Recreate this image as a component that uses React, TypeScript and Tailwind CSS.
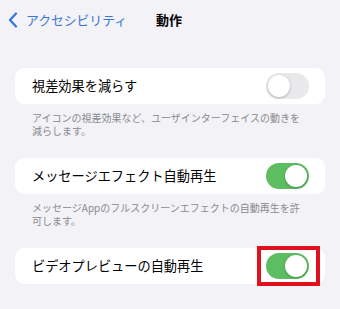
const font = { fontFamily: '"Noto Sans CJK JP", "Noto Sans", sans-serif' };

function Toggle({ on }: { on: boolean }) {
  return (
    <div
      className={`w-[43px] h-[26px] rounded-full p-[2px] flex ${
        on ? 'bg-[#5dbe61] justify-end' : 'bg-[#e9e9eb] justify-start'
      }`}
    >
      <div className="w-[22px] h-[22px] rounded-full bg-white shadow-[0_1px_3px_rgba(0,0,0,0.25)]" />
    </div>
  );
}

function Row({ label, on, highlight }: { label: string; on: boolean; highlight?: boolean }) {
  return (
    <div className="mx-[15px] h-[36px] bg-white rounded-[9px] pl-[17px] pr-[16px] flex items-center justify-between">
      <span className="text-[13.2px] text-black leading-none">{label}</span>
      {highlight ? (
        <div className="border-[4px] border-[#e0101c] pl-[5px] pr-[7px] py-[3px] -mr-[11px] -my-[2px]">
          <Toggle on={on} />
        </div>
      ) : (
        <Toggle on={on} />
      )}
    </div>
  );
}

function Note({ children }: { children: React.ReactNode }) {
  return (
    <p className="mx-[15px] pl-[17px] pr-[16px] pt-[7px] text-[10px] leading-[13px] text-[#8a8a8e]">
      {children}
    </p>
  );
}

export default function App() {
  return (
    <div className="w-[340px] h-[309px] bg-[#f2f2f7] overflow-hidden" style={font}>
      <div className="h-[40px] flex items-center">
        <div className="flex items-center pl-[8px] text-[#3a76d6]">
          <svg width="10" height="16" viewBox="0 0 10 16" fill="none">
            <path d="M8 1.5 L2 8 L8 14.5" stroke="currentColor" strokeWidth="2.3" strokeLinecap="round" strokeLinejoin="round" />
          </svg>
          <span className="ml-[8px] text-[12.8px]">アクセシビリティ</span>
        </div>
        <span className="ml-[29px] text-[13px] font-bold text-black">動作</span>
      </div>
      <div className="h-[28px]" />
      <Row label="視差効果を減らす" on={false} />
      <Note>アイコンの視差効果など、ユーザインターフェイスの動きを減らします。</Note>
      <div className="h-[21px]" />
      <Row label="メッセージエフェクト自動再生" on />
      <Note>メッセージAppのフルスクリーンエフェクトの自動再生を許可します。</Note>
      <div className="h-[21px]" />
      <Row label="ビデオプレビューの自動再生" on highlight />
    </div>
  );
}
